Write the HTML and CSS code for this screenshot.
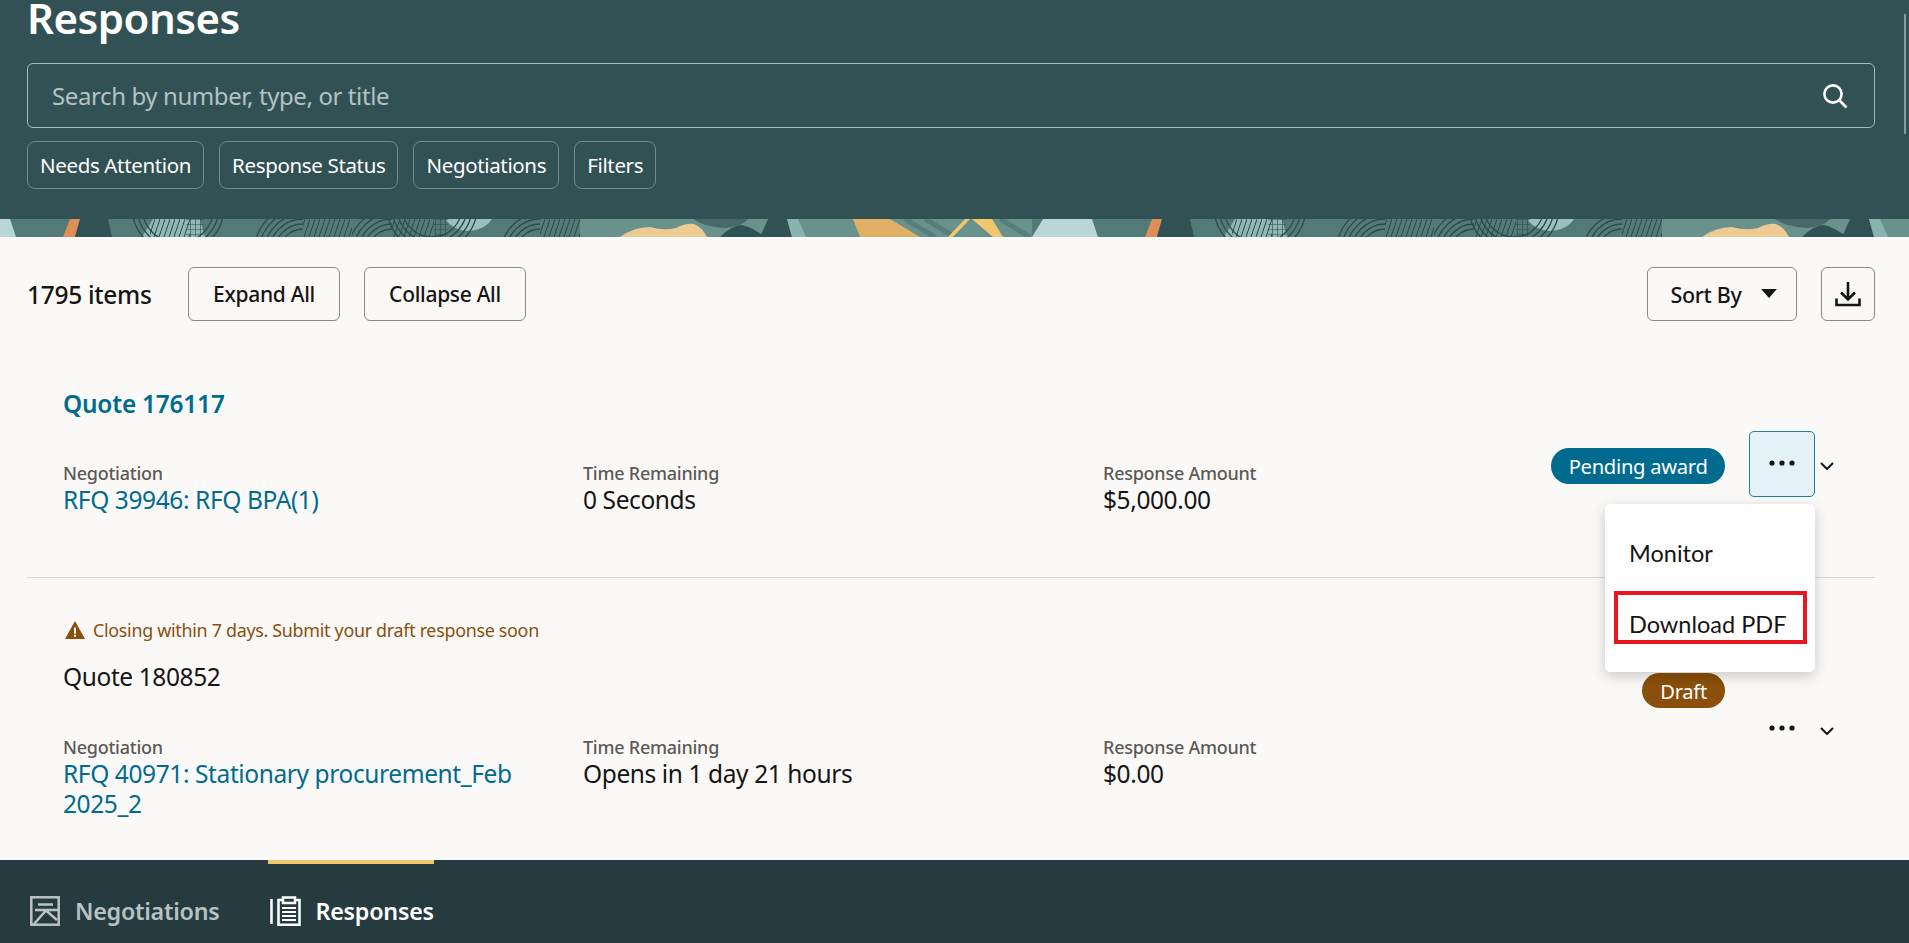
FILE: index.html
```html
<!DOCTYPE html>
<html lang="en">
<head>
<meta charset="utf-8">
<title>Responses</title>
<link rel="stylesheet" href="styles.css">
</head>
<body>
<div class="app">
  <header class="hero">
    <h1 class="hero-title">Responses</h1>
    <div class="search">
      <span class="search-text">Search by number, type, or title</span>
      <svg class="search-icon" viewBox="0 0 26 26" aria-hidden="true"><circle cx="11" cy="11" r="8.6"/><path d="M17 17l7.5 7.5"/></svg>
    </div>
    <div class="chips">
      <span class="chip">Needs Attention</span>
      <span class="chip">Response Status</span>
      <span class="chip">Negotiations</span>
      <span class="chip">Filters</span>
    </div>
  </header>
  <svg class="strip" aria-hidden="true">
    <defs>
      <pattern id="hatch" width="5" height="18" patternUnits="userSpaceOnUse"><path d="M-1 18L5 0M4 18L10 0" stroke="#2a4a4c" stroke-width="1" fill="none"/></pattern>
      <pattern id="grid" width="5" height="5" patternUnits="userSpaceOnUse"><path d="M0 0v5M0 0h5" stroke="#2a4a4c" stroke-width="1.2" fill="none"/></pattern>
      <pattern id="tile" width="1082" height="18" patternUnits="userSpaceOnUse">
        <rect width="1082" height="18" fill="#527a76"/>
        <rect x="580" width="452" height="18" fill="#6a928d"/>
        <path d="M1032 18L1043 0H1092L1098 18Z M-50 18L-39 0H10L16 18Z" fill="#b9d5d8"/>
        <path d="M63 18L70 0H80L75 18Z" fill="#e08e57"/>
        <path d="M75 18L80 0H108L112 18Z" fill="#305254"/>
        <path d="M142 18L153 0H200L205 18Z" fill="#8fb8b5"/>
        <rect x="150" width="40" height="18" fill="url(#hatch)"/>
        <rect x="186" width="18" height="18" fill="url(#grid)"/>
        <g fill="none" stroke="#2a4a4c" stroke-width="1.3">
          <circle cx="178" cy="-12" r="36"/><circle cx="178" cy="-12" r="41"/><circle cx="178" cy="-12" r="46"/>
          <circle cx="303" cy="34" r="24"/><circle cx="303" cy="34" r="29"/><circle cx="303" cy="34" r="34"/><circle cx="303" cy="34" r="39"/><circle cx="303" cy="34" r="44"/><circle cx="303" cy="34" r="49"/>
          <circle cx="392" cy="34" r="24"/><circle cx="392" cy="34" r="29"/><circle cx="392" cy="34" r="34"/><circle cx="392" cy="34" r="39"/><circle cx="392" cy="34" r="44"/>
          <circle cx="540" cy="34" r="24"/><circle cx="540" cy="34" r="29"/><circle cx="540" cy="34" r="34"/><circle cx="540" cy="34" r="39"/>
        </g>
        <rect x="303" width="49" height="18" fill="#527a76"/>
        <rect x="392" width="42" height="18" fill="#527a76"/>
        <rect x="540" width="40" height="18" fill="#527a76"/>
        <rect x="303" width="49" height="18" fill="url(#hatch)"/>
        <rect x="392" width="42" height="18" fill="url(#hatch)"/>
        <rect x="540" width="40" height="18" fill="url(#hatch)"/>
        <path d="M445 0H492Q484 12 466 12Q452 10 445 0Z" fill="#98c0bd"/>
        <rect x="434" width="14" height="18" fill="url(#grid)"/>
        <g fill="none" stroke="#2a4a4c" stroke-width="1.3">
          <circle cx="432" cy="-12" r="30"/><circle cx="432" cy="-12" r="35"/><circle cx="432" cy="-12" r="40"/><circle cx="432" cy="-12" r="45"/>
        </g>
        <path d="M693 0H748Q742 8 724 9Q704 8 693 0Z" fill="#47696a"/>
        <path d="M620 18Q634 8 650 8Q664 12 676 9Q686 4 694 5Q702 8 707 18Z" fill="#eecb90"/>
        <path d="M720 18Q732 6 742 6Q752 8 765 18Z" fill="#2f5254"/>
        <path d="M760 18L768 0H787L792 18Z" fill="#305254"/>
        <path d="M787 0H798L806 18H792Z" fill="#88b3ae"/>
        <path d="M853 0H890L920 18H860Z" fill="#e0af66"/>
        <path d="M905 0L935 18M925 0L955 18M1000 0L1030 18" stroke="#567f7b" stroke-width="5" fill="none"/>
        <path d="M948 18L965 0H970L953 18Z M972 0H992L1003 18H993Z" fill="#f2c66d"/>
      </pattern>
    </defs>
    <rect width="100%" height="18" fill="url(#tile)"/>
  </svg>
  <main class="content">
    <div class="toolbar">
      <span class="count">1795 items</span>
      <button class="btn btn-expand">Expand All</button>
      <button class="btn btn-collapse">Collapse All</button>
      <button class="btn btn-sort">Sort By<svg class="caret" viewBox="0 0 14 8" aria-hidden="true"><path d="M0 0h14L7 8z"/></svg></button>
      <button class="btn btn-download" aria-label="Download">
        <svg viewBox="0 0 26 26" aria-hidden="true"><path d="M13 1v17M6 11.5l7 7 7-7"/><path d="M1.5 17.5v6.5h23v-6.5"/></svg>
      </button>
    </div>
    <section class="card card-first">
      <a class="quote-link">Quote 176117</a>
      <div class="row">
        <div class="meta">
          <div class="field"><span class="label">Negotiation</span><a class="value link">RFQ 39946: RFQ BPA(1)</a></div>
          <div class="field"><span class="label">Time Remaining</span><span class="value">0 Seconds</span></div>
          <div class="field"><span class="label">Response Amount</span><span class="value">$5,000.00</span></div>
        </div>
        <div class="actions">
          <span class="badge badge-pending">Pending award</span>
          <div class="more-wrap">
            <button class="more more-active" aria-label="More">
              <svg class="dots" viewBox="0 0 26 6" aria-hidden="true"><circle cx="3" cy="3" r="2.6"/><circle cx="13" cy="3" r="2.6"/><circle cx="23" cy="3" r="2.6"/></svg>
            </button>
            <div class="menu">
              <div class="menu-item">Monitor</div>
              <div class="menu-item menu-item-marked">Download PDF</div>
            </div>
          </div>
          <svg class="chev" viewBox="0 0 14 8" aria-hidden="true"><path d="M1 1l6 6 6-6"/></svg>
        </div>
      </div>
    </section>
    <section class="card card-second">
      <div class="warn">
        <svg viewBox="0 0 20 18" aria-hidden="true"><path class="warn-tri" d="M10 0L20 18H0Z"/><path class="warn-mark" d="M9 6.5h2v6H9zM9 13.8h2v2H9z"/></svg>
        <span>Closing within 7 days. Submit your draft response soon</span>
      </div>
      <div class="head-row">
        <span class="quote-plain">Quote 180852</span>
        <span class="badge badge-draft">Draft</span>
      </div>
      <div class="row row-second">
        <div class="meta">
          <div class="field"><span class="label">Negotiation</span><a class="value link wrap">RFQ 40971: Stationary procurement_Feb 2025_2</a></div>
          <div class="field"><span class="label">Time Remaining</span><span class="value">Opens in 1 day 21 hours</span></div>
          <div class="field"><span class="label">Response Amount</span><span class="value">$0.00</span></div>
        </div>
        <div class="actions actions-second">
          <button class="more" aria-label="More">
            <svg class="dots" viewBox="0 0 26 6" aria-hidden="true"><circle cx="3" cy="3" r="2.6"/><circle cx="13" cy="3" r="2.6"/><circle cx="23" cy="3" r="2.6"/></svg>
          </button>
          <svg class="chev" viewBox="0 0 14 8" aria-hidden="true"><path d="M1 1l6 6 6-6"/></svg>
        </div>
      </div>
    </section>
  </main>
  <footer class="tabs">
    <div class="tab">
      <svg class="tab-icon" viewBox="0 0 30 30" aria-hidden="true"><rect x="1.3" y="1.3" width="27.4" height="27.4"/><path d="M8 8.5h15M5 14h25M4 28L16 14.5 27 24"/></svg>
      <span>Negotiations</span>
    </div>
    <div class="tab tab-active">
      <svg class="tab-icon" viewBox="0 0 31 30" aria-hidden="true"><path d="M1.5 3v25"/><path d="M12 4H8.5v24.7h21V4H26"/><path d="M13 1.5h12v5.5H13z"/><path class="tab-lines" d="M12 12h14M12 16h14M12 20h14M12 24h14"/></svg>
      <span>Responses</span>
    </div>
  </footer>
  <div class="scrollbar"></div>
</div>
</body>
</html>
```
FILE: styles.css
```css
* { box-sizing: border-box; }
html, body { margin: 0; height: 100%; overflow: hidden; }
body { font-family: "Noto Sans", "Open Sans", sans-serif; color: #161513; background: #fbf9f8; }
.app { position: relative; display: flex; flex-direction: column; height: 943px; }

.hero { height: 219px; padding: 0 34px 0 27px; background: #325155; color: #fff; flex: none; }
.hero-title { margin: 0; height: 63px; font-size: 42px; line-height: 36px; font-weight: 600; letter-spacing: -0.5px; }
.search { display: flex; align-items: center; justify-content: space-between; height: 65px; padding: 0 26px 0 24px; border: 1px solid #a9b8ba; border-radius: 6px; }
.search-text { font-size: 24px; color: #b4c2c3; letter-spacing: -0.4px; }
.search-icon { width: 26px; height: 26px; fill: none; stroke: #fff; stroke-width: 2.6; }
.chips { display: flex; gap: 15px; margin-top: 13px; }
.chip { display: flex; align-items: center; height: 48px; padding: 0 12px; border: 1px solid #74898c; border-radius: 8px; font-size: 20.5px; letter-spacing: -0.35px; }

.strip { display: block; flex: none; width: 100%; height: 18px; }

.content { flex: 1; min-height: 0; padding: 30px 34px 0 27px; background: #fbf9f8; }
.toolbar { display: flex; align-items: center; height: 54px; }
.count { width: 161px; font-size: 24.5px; font-weight: 500; letter-spacing: -0.3px; }
.btn { display: flex; align-items: center; justify-content: center; height: 54px; padding: 0; border: 1px solid #8b8987; border-radius: 6px; background: transparent; color: #161513; font: 500 21px "Noto Sans", sans-serif; letter-spacing: -0.3px; }
.btn-expand { width: 152px; margin-right: 24px; }
.btn-collapse { width: 162px; margin-right: auto; }
.btn-sort { width: 150px; margin-right: 24px; padding-left: 3px; gap: 19px; font-size: 21.5px; }
.btn-download { width: 54px; }
.btn-download svg { width: 26px; height: 26px; fill: none; stroke: #161513; stroke-width: 2.6; }
.caret { width: 16px; height: 9px; fill: #161513; margin-top: -2px; }

.card { padding: 0 36px; }
.card-first { height: 257px; padding-top: 59px; border-bottom: 1px solid #d6d4d2; }
.quote-link { display: block; height: 48px; font-size: 24.4px; line-height: 47px; font-weight: 600; color: #006b8f; letter-spacing: -0.2px; }
.row { display: flex; justify-content: space-between; }
.card-first .row { margin-top: 33px; }
.meta { display: grid; flex: 1; min-width: 0; grid-template-columns: 520px 520px 1fr; }
.field { display: flex; flex-direction: column; }
.label { height: 24px; font-size: 18px; line-height: 24px; font-weight: 500; color: #5c5a57; letter-spacing: -0.25px; }
.value { font-size: 24.5px; line-height: 30px; letter-spacing: -0.4px; }
.link { color: #006b8f; }
.wrap { max-width: 460px; }

.actions { display: flex; flex: none; align-items: center; height: 66px; margin: -30px 5px 0 0; }
.badge { display: flex; align-items: center; border-radius: 18px; color: #fff; font-size: 20.2px; letter-spacing: -0.3px; white-space: nowrap; }
.badge-pending { height: 36px; padding: 0 17.5px; background: #006b8f; margin: 4px 24px 0 0; }
.badge-draft { height: 35px; padding: 0 18px; background: #8a4f0b; margin: 17px 114px 0 0; }
.more-wrap { position: relative; }
.more { display: flex; align-items: center; justify-content: center; width: 66px; height: 66px; padding: 0; border: 0; background: transparent; }
.more-active { border: 1px solid #1e7f9f; border-radius: 5px; background: #e4f1f7; }
.dots { width: 26px; height: 6px; fill: #161513; margin-top: -2px; }
.chev { width: 14px; height: 8px; margin: 4px 0 0 5px; fill: none; stroke: #161513; stroke-width: 2; flex: none; }

.menu { position: absolute; z-index: 2; top: 73px; right: 0; width: 210px; height: 168px; padding: 16px 8px 0 9px; background: #fff; border-radius: 5px; box-shadow: 0 4px 14px rgba(0,0,0,.2); }
.menu-item { display: flex; align-items: center; height: 53px; padding: 12px 0 0 11px; border: 4px solid transparent; font-size: 23.5px; font-family: "Lato", "Noto Sans", sans-serif; color: #161513; margin-bottom: 18px; }
.menu-item-marked { border-color: #e8171f; margin-bottom: 0; }

.card-second { padding-top: 39px; }
.warn { display: flex; align-items: center; gap: 8px; height: 26px; margin-left: 2px; font-size: 17.9px; color: #8a4f0b; letter-spacing: -0.3px; }
.warn svg { width: 20px; height: 18px; flex: none; }
.warn-tri { fill: #8a4f0b; }
.warn-mark { fill: #fff; }
.head-row { display: flex; align-items: flex-start; justify-content: space-between; height: 79px; margin-top: 13px; }
.quote-plain { font-size: 24.5px; line-height: 41px; letter-spacing: -0.4px; }
.actions-second { margin-top: -24px; height: 36px; }
.actions-second .more { height: 36px; }

.tabs { display: flex; gap: 48px; height: 83px; padding-left: 30px; background: #253b40; flex: none; }
.tab { display: flex; align-items: center; gap: 15px; height: 83px; padding-top: 18px; font-size: 23.3px; font-weight: 600; color: #b9c2c3; letter-spacing: -0.25px; }
.tab-active { color: #fff; border-top: 4px solid #f0c86b; padding: 14px 0 0 2px; }
.tab-icon { width: 30px; height: 30px; fill: none; stroke: #bcc3c4; stroke-width: 2.5; }
.tab-active .tab-icon { width: 31px; stroke: #fff; }
.tab-lines { stroke-width: 2; }

.scrollbar { position: absolute; top: 14px; right: 3px; width: 2px; height: 120px; background: #8a9a9c; }
```
